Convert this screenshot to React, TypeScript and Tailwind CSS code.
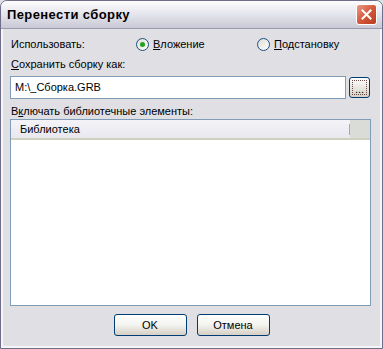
import React from "react"

const font = { fontFamily: '"Liberation Sans", Arial, sans-serif' }

function Radio({ checked, label, ul }: { checked?: boolean; label: string; ul: string }) {
  return (
    <div className="flex items-center gap-[4px]">
      <div className="w-[13px] h-[13px] rounded-full border border-[#1c5180] bg-gradient-to-br from-[#dcdcd6] to-white flex items-center justify-center">
        {checked && <div className="w-[5px] h-[5px] rounded-full bg-[#21a121]" />}
      </div>
      <span>
        <span className="underline">{ul}</span>
        {label}
      </span>
    </div>
  )
}

function XpButton({ children }: { children: React.ReactNode }) {
  return (
    <button className="w-[73px] h-[22px] rounded-[3px] border border-[#003c74] bg-gradient-to-b from-white via-[#f3f3ef] to-[#d6d0c5] text-[11px] text-black flex items-center justify-center">
      {children}
    </button>
  )
}

export default function App() {
  return (
    <div style={font} className="w-[383px] h-[349px] text-[11px] text-black bg-[#e0dfe3]">
      <div className="w-full h-full flex flex-col rounded-t-[7px] border border-[#6e6e8a] overflow-hidden">
        {/* title bar */}
        <div className="h-[28px] shrink-0 flex items-center justify-between pl-[6px] pr-[5px] bg-gradient-to-b from-[#fdfdfe] via-[#e4e4ec] to-[#c9c9d6] border-b border-[#b7b7c6]">
          <span className="text-[13px] font-bold tracking-[0.4px]">Перенести сборку</span>
          <div className="w-[21px] h-[21px] rounded-[3px] border border-white bg-gradient-to-br from-[#e89a88] via-[#d4583a] to-[#b93a20] flex items-center justify-center">
            <svg width="11" height="11" viewBox="0 0 11 11">
              <path d="M1.5 1.5 L9.5 9.5 M9.5 1.5 L1.5 9.5" stroke="white" strokeWidth="2" strokeLinecap="square" />
            </svg>
          </div>
        </div>
        {/* body */}
        <div className="flex-1 flex flex-col px-[7px] pt-[8px] pb-[10px] border-x-[2px] border-b-[2px] border-[#f5f5f7] outline outline-1 outline-[#9a99ad]">
          <div className="flex items-center h-[15px]">
            <span className="w-[126px] pl-[1px]">Использовать:</span>
            <div className="w-[121px]">
              <Radio checked ul="В" label="ложение" />
            </div>
            <Radio ul="П" label="одстановку" />
          </div>
          <div className="mt-[4px] h-[15px] pl-[1px]">
            <span className="underline">С</span>охранить сборку как:
          </div>
          <div className="mt-[5px] flex items-center gap-[3px]">
            <div className="w-[336px] h-[23px] border border-[#7f9db9] bg-white flex items-center pl-[4px]">
              M:\_Сборка.GRB
            </div>
            <div className="w-[21px] h-[21px] rounded-[3px] border border-[#003c74] bg-gradient-to-b from-white to-[#d6d0c5] p-[2px]">
              <div className="w-full h-full border border-dotted border-[#6b4a4a] flex items-end justify-center leading-[10px]">...</div>
            </div>
          </div>
          <div className="mt-[4px] h-[15px] pl-[1px]">
            В<span className="underline">к</span>лючать библиотечные элементы:
          </div>
          <div className="mt-[1px] w-[361px] h-[187px] border border-[#7f9db9] bg-white flex flex-col">
            <div className="h-[20px] flex bg-gradient-to-b from-[#f3f3f8] to-[#e8e8ef] border-b-[2px] border-[#d0d0bf]">
              <div className="w-[339px] flex items-center pl-[9px] relative">
                Библиотека
                <div className="absolute right-0 top-[4px] h-[11px] w-[1px] bg-[#a8a8ab]" />
              </div>
              <div className="flex-1 bg-[#dadcd8]" />
            </div>
          </div>
          <div className="mt-[8px] flex justify-center gap-[10px]">
            <XpButton>OK</XpButton>
            <XpButton>Отмена</XpButton>
          </div>
        </div>
      </div>
    </div>
  )
}
